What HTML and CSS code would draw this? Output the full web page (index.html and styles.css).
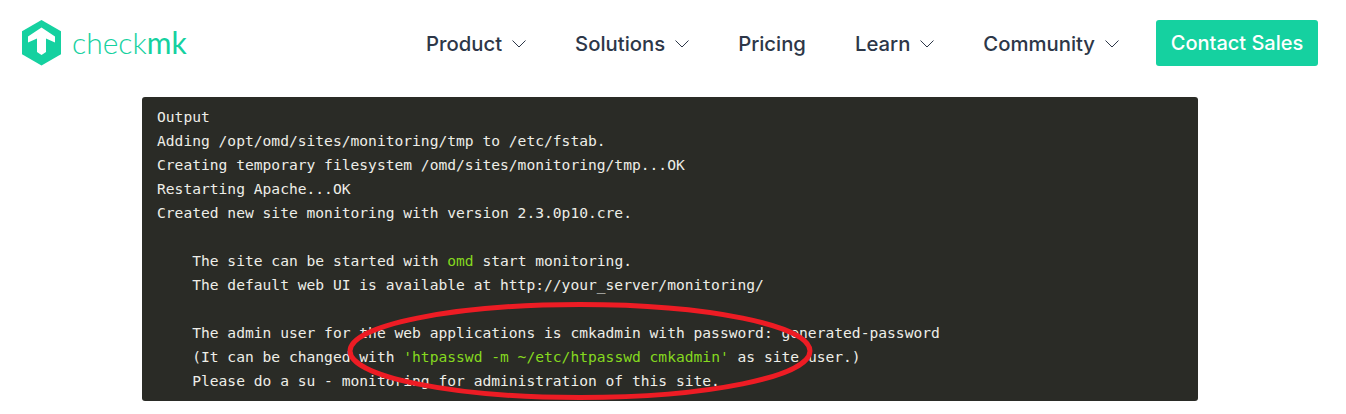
FILE: index.html
```html
<!DOCTYPE html>
<html lang="en">
<head>
<meta charset="utf-8">
<title>Checkmk</title>
<link rel="stylesheet" href="styles.css">
</head>
<body>
<header class="site-header">
  <a class="logo" href="#">
    <svg class="logo-mark" width="40" height="46" viewBox="0 0 40 46" aria-hidden="true">
      <polygon points="19.5,0 39,11.3 39,34.2 19.5,45.5 0,34.2 0,11.3" fill="#15d1a0"/>
      <polygon points="19.5,7.5 33,16.5 33,22.5 24,18.5 24,32 19.5,35 15,32 15,18.5 6,22.5 6,16.5" fill="#fff"/>
    </svg>
    <span class="logo-text">check<b>mk</b></span>
  </a>
  <nav class="nav">
    <a class="nav-item" href="#">Product<svg class="chev" width="14" height="8" viewBox="0 0 14 8"><path d="M.5.5L7 7l6.5-6.5"/></svg></a>
    <a class="nav-item" href="#">Solutions<svg class="chev" width="14" height="8" viewBox="0 0 14 8"><path d="M.5.5L7 7l6.5-6.5"/></svg></a>
    <a class="nav-item" href="#">Pricing</a>
    <a class="nav-item" href="#">Learn<svg class="chev" width="14" height="8" viewBox="0 0 14 8"><path d="M.5.5L7 7l6.5-6.5"/></svg></a>
    <a class="nav-item" href="#">Community<svg class="chev" width="14" height="8" viewBox="0 0 14 8"><path d="M.5.5L7 7l6.5-6.5"/></svg></a>
  </nav>
  <a class="cta" href="#">Contact Sales</a>
</header>
<main class="content">
  <div class="code-wrap">
<pre class="code">Output
Adding /opt/omd/sites/monitoring/tmp to /etc/fstab.
Creating temporary filesystem /omd/sites/monitoring/tmp...OK
Restarting Apache...OK
Created new site monitoring with version 2.3.0p10.cre.

    The site can be started with <span class="hl">omd</span> start monitoring.
    The default web UI is available at http://your_server/monitoring/

    The admin user for the web applications is cmkadmin with password: generated-password
    (It can be changed with <span class="hl">'htpasswd -m ~/etc/htpasswd cmkadmin'</span> as site user.)
    Please do a su - monitoring for administration of this site.</pre>
    <svg class="circle" width="470" height="100" viewBox="0 0 470 100" aria-hidden="true">
      <ellipse cx="235" cy="50" rx="230" ry="46.5" fill="none" stroke="#ed1c24" stroke-width="5"/>
    </svg>
  </div>
</main>
</body>
</html>
```
FILE: styles.css
```css
* { box-sizing: border-box; }
html, body { margin: 0; padding: 0; background: #fff; overflow: hidden; }
body { height: 414px; }
a { text-decoration: none; color: inherit; }

.site-header {
  display: flex;
  align-items: center;
  height: 86px;
  padding: 0 28px 0 22px;
  font-family: Inter, "Liberation Sans", sans-serif;
}
.logo { display: flex; align-items: center; gap: 10px; }
.logo-mark { display: block; }
.logo-text {
  font-family: Lato, "Liberation Sans", sans-serif;
  font-weight: 300;
  font-size: 30px;
  line-height: 1;
  color: #15d1a0;
  margin-top: -3px;
}
.logo-text b { font-weight: 400; }

.nav {
  display: flex;
  align-items: center;
  gap: 49px;
  margin-left: auto;
  margin-right: 37px;
}
.nav-item {
  display: flex;
  align-items: center;
  gap: 10px;
  font-size: 20.3px;
  font-weight: 550;
  color: #2d3748;
}
.chev { display: block; margin-top: 2px; fill: none; stroke: #2d3748; stroke-width: 1; }

.cta {
  display: flex;
  align-items: center;
  justify-content: center;
  width: 162px;
  height: 46px;
  background: #15d1a0;
  border-radius: 3px;
  color: #fff;
  font-size: 20px;
  font-weight: 500;
}

.content { padding: 11px 148px 0 142px; }
.code-wrap { position: relative; }
.code {
  margin: 0;
  padding: 8px 15px;
  height: 304px;
  background: #2a2b26;
  border-radius: 3px;
  color: #eeeee8;
  font-family: "DejaVu Sans Mono", monospace;
  font-size: 14.62px;
  line-height: 24px;
  overflow: hidden;
}
.hl { color: #85d91f; }
.circle { position: absolute; left: 203px; top: 204px; }
```
